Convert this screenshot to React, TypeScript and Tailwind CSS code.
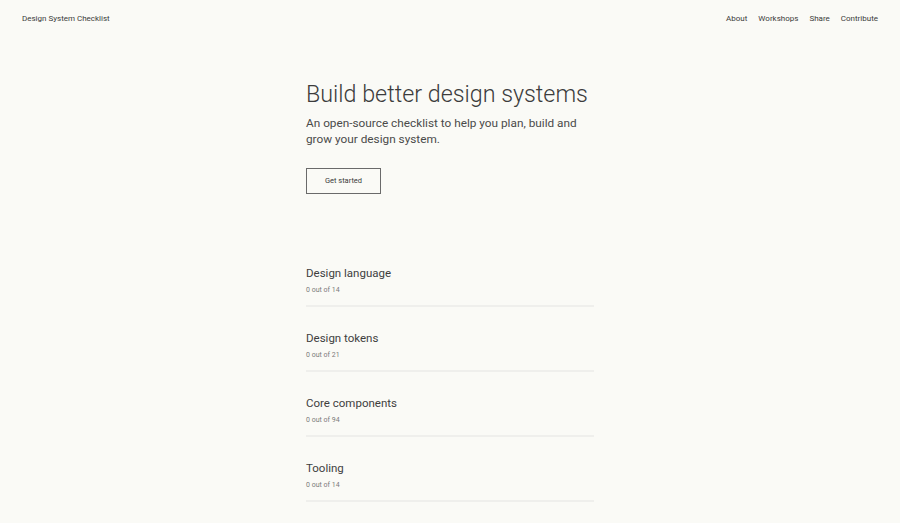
import React from 'react';

const sections = [
  { title: 'Design language', count: '0 out of 14' },
  { title: 'Design tokens', count: '0 out of 21' },
  { title: 'Core components', count: '0 out of 94' },
  { title: 'Tooling', count: '0 out of 14' },
];

const App: React.FC = () => {
  return (
    <div className="min-h-[523px] bg-[#fafaf6] text-[#3a3a3a] font-['Roboto',sans-serif]">
      <header className="flex items-center justify-between px-[22px] pt-[14px] h-[24px] text-[8px]">
        <a className="text-[#3a3a3a]">Design System Checklist</a>
        <nav className="flex gap-[11px]">
          <a>About</a>
          <a>Workshops</a>
          <a>Share</a>
          <a>Contribute</a>
        </nav>
      </header>

      <main className="mx-auto w-[288px] pt-[55px]">
        <h1 className="whitespace-nowrap text-[23.3px] font-light leading-[30px] text-[#3c3c3c]">
          Build better design systems
        </h1>
        <p className="mt-[6px] text-[11.8px] leading-[16px] text-[#4a4a4a]">
          An open-source checklist to help you plan, build and grow your design system.
        </p>
        <button className="mt-[21px] h-[26px] w-[75px] border border-[#6a6a6a] text-[7.5px] text-[#3a3a3a]">
          Get started
        </button>

        <div className="mt-[48px]">
          {sections.map((s) => (
            <div key={s.title} className="pt-[23px] pb-[10px] border-b-2 border-[#efefec]">
              <h2 className="text-[11.5px] leading-[16px] text-[#3e3e3e]">{s.title}</h2>
              <p className="mt-[4px] text-[7px] leading-[10px] text-[#7a7a7a]">{s.count}</p>
            </div>
          ))}
        </div>
      </main>
    </div>
  );
};

export default App;
